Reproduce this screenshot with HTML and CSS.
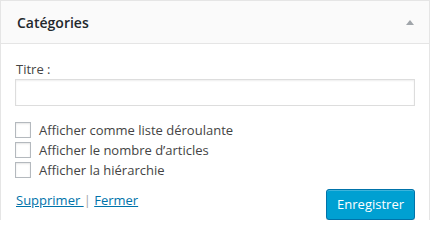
FILE: index.html
```html
<!DOCTYPE html>
<html lang="fr">
<head>
    <meta charset="UTF-8">
    <title>Widget Catégories</title>
    <link rel="stylesheet" href="styles.css">
</head>
<body>

    <div class="widget">
        <div class="widget-top">
            <h3 class="widget-title">Catégories</h3>
            <span class="widget-toggle"></span>
        </div>
        <div class="widget-inside">
            <label class="field-label" for="title">Titre :</label>
            <input type="text" class="widefat" id="title" />

            <div class="options">
                <label class="option"><input type="checkbox" class="checkbox" /> Afficher comme liste déroulante</label>
                <label class="option"><input type="checkbox" class="checkbox" /> Afficher le nombre d’articles</label>
                <label class="option"><input type="checkbox" class="checkbox" /> Afficher la hiérarchie</label>
            </div>

            <div class="widget-actions">
                <div class="links">
                    <a href="#">Supprimer </a> <span class="sep">|</span> <a href="#">Fermer</a>
                </div>
                <button class="button-primary">Enregistrer</button>
            </div>
        </div>
    </div>

</body>
</html>
```

FILE: styles.css
```css
body {
    margin: 0;
    background: #fff;
    font-family: 'Open Sans', sans-serif;
    font-size: 13px;
    color: #444;
}
.widget {
    width: 430px;
    box-sizing: border-box;
    border: 1px solid #e5e5e5;
    border-bottom: none;
    background: #fff;
}
.widget-top {
    display: flex;
    justify-content: space-between;
    align-items: center;
    height: 42px;
    padding: 0 15px 0 16px;
    background: #fafafa;
    border-bottom: 1px solid #e5e5e5;
}
.widget-title {
    margin: 0;
    font-size: 14px;
    font-weight: 600;
    color: #23282d;
}
.widget-toggle {
    width: 0;
    height: 0;
    border-left: 4px solid transparent;
    border-right: 4px solid transparent;
    border-bottom: 5px solid #a0a5aa;
}
.widget-inside {
    padding: 16px 14px 0 14px;
}
.field-label {
    display: block;
    line-height: 18px;
    padding-left: 1px;
}
.widefat {
    display: block;
    width: 100%;
    height: 27px;
    box-sizing: border-box;
    margin: 1px 0 0 0;
    border: 1px solid #ddd;
    box-shadow: inset 0 1px 2px rgba(0, 0, 0, 0.07);
    font-family: inherit;
    font-size: 13px;
    outline: none;
}
.options {
    display: flex;
    flex-direction: column;
    margin-top: 14px;
}
.option {
    display: flex;
    align-items: center;
    height: 20px;
    line-height: 20px;
}
.checkbox {
    -webkit-appearance: none;
    appearance: none;
    width: 16px;
    height: 16px;
    margin: 0 8px 0 0;
    border: 1px solid #b4b9be;
    background: #fff;
    box-shadow: inset 0 1px 2px rgba(0, 0, 0, 0.1);
}
.widget-actions {
    display: flex;
    justify-content: space-between;
    align-items: flex-start;
    margin-top: 9px;
}
.links {
    padding: 2px 0 0 1px;
    line-height: 18px;
}
.links a {
    color: #0073aa;
    text-decoration: underline;
}
.sep {
    color: #a0a5aa;
}
.button-primary {
    height: 31px;
    padding: 0 10px 1px;
    font-family: inherit;
    font-size: 13px;
    color: #fff;
    background: #00a0d2;
    border: 1px solid #0073aa;
    border-radius: 3px;
    box-shadow: inset 0 1px 0 rgba(120, 200, 230, 0.5), 0 1px 0 rgba(0, 0, 0, 0.15);
    cursor: pointer;
}
```
